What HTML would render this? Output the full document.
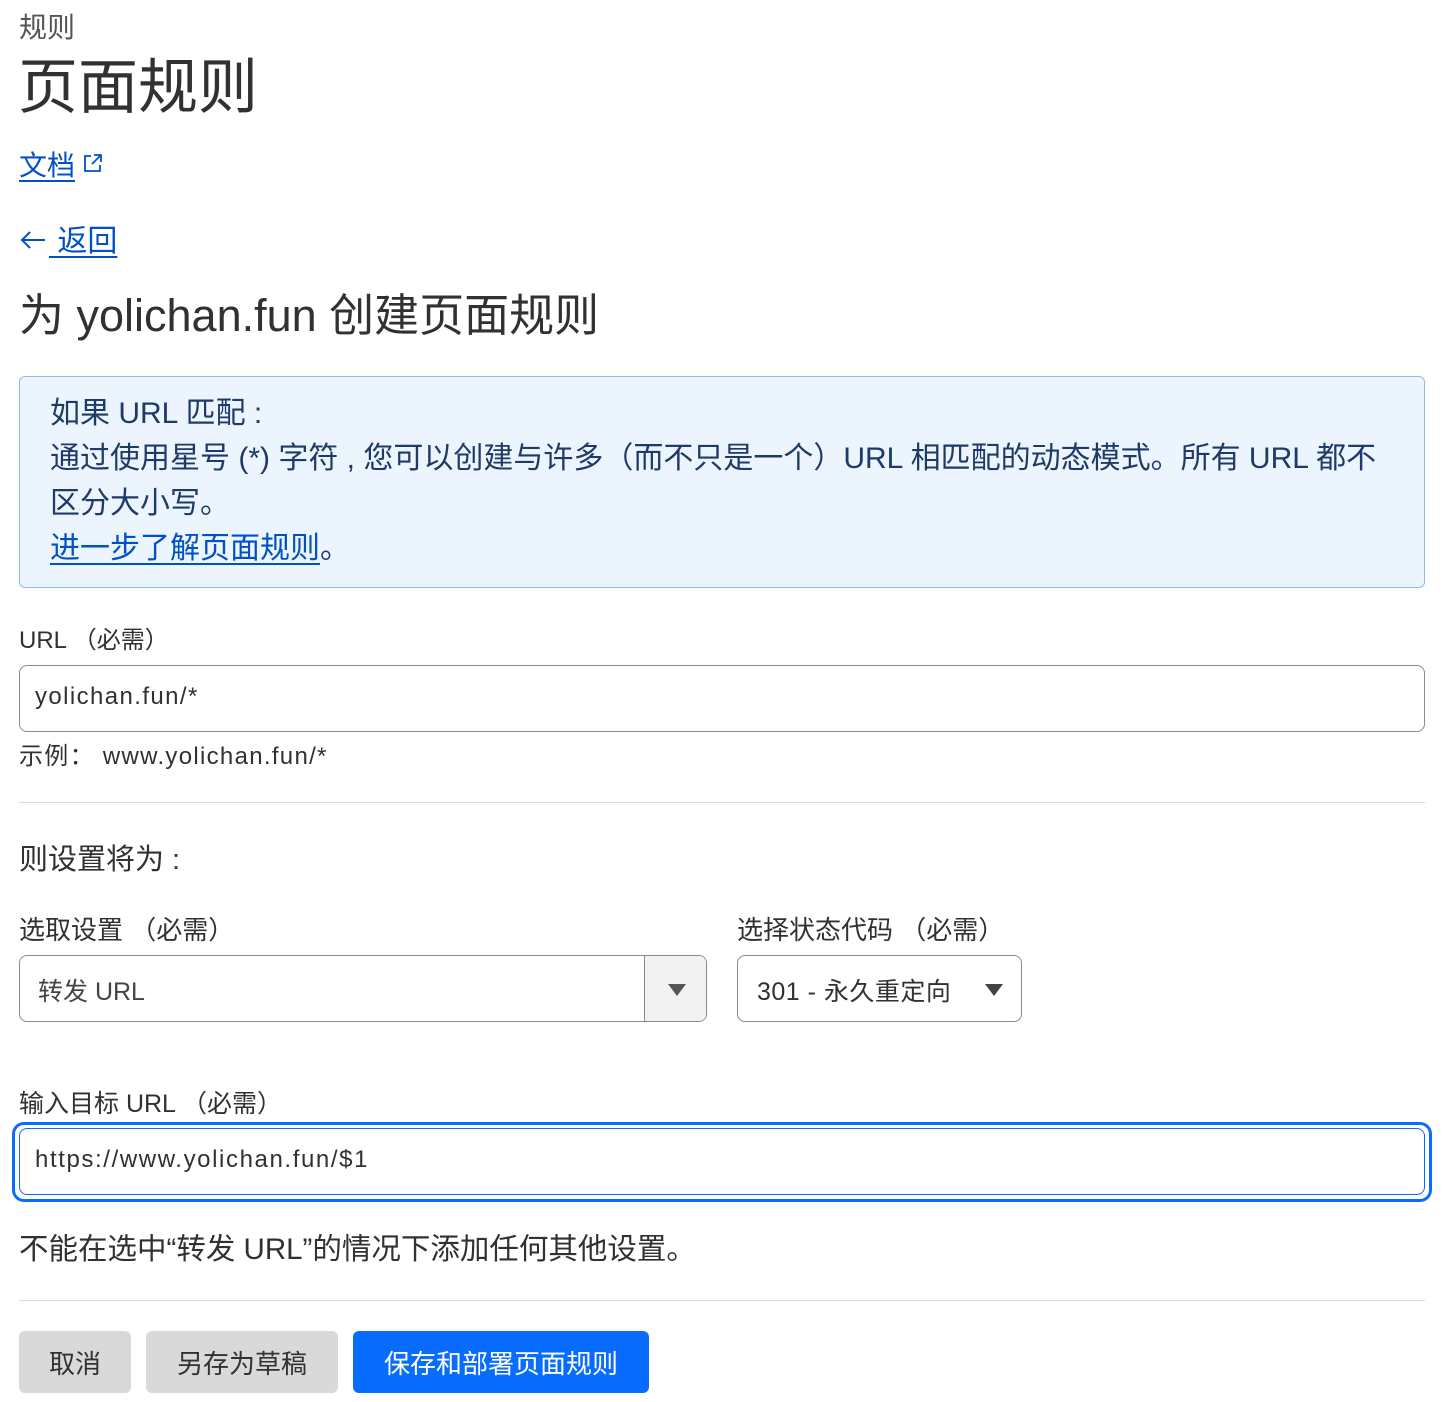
<!DOCTYPE html>
<html><head><meta charset="utf-8"><style>
*{margin:0;padding:0;box-sizing:border-box}
body{width:1456px;height:1402px;background:#fff;font-family:"Liberation Sans","Noto Sans CJK SC",sans-serif;color:#313131;position:relative;overflow:hidden}
.a{position:absolute;white-space:nowrap}
.lnk{color:#0051c3;text-decoration:underline;text-underline-offset:5px;text-decoration-thickness:2px}
.box{position:absolute;border:1px solid #8a8a8a;border-radius:8px;background:#fff}
.btn{position:absolute;top:1331px;height:62px;border-radius:6px;font-size:26px;display:flex;align-items:center;justify-content:center}
</style></head><body>
<div class="a" style="left:19px;top:6px;font-size:28px;color:#555">规则</div>
<div class="a" style="left:18px;top:48px;font-size:60px;line-height:80px">页面规则</div>
<div class="a lnk" style="left:19px;top:144px;font-size:28px">文档</div>
<svg class="a" style="left:83px;top:153px" width="20" height="20" viewBox="0 0 20 20" fill="none" stroke="#0051c3" stroke-width="1.8"><path d="M8 3H2v15h15v-6M11 2h7v7M18 2l-9 9"/></svg>
<svg class="a" style="left:19px;top:228px" width="28" height="24" viewBox="0 0 28 24" fill="none" stroke="#0051c3" stroke-width="2"><path d="M26 12H3M11 4l-8 8 8 8"/></svg>
<div class="a lnk" style="left:49px;top:216px;font-size:30px">&nbsp;返回</div>
<div class="a" style="left:19px;top:286px;font-size:45px;line-height:60px">为 yolichan.fun 创建页面规则</div>
<div class="a" style="left:19px;top:376px;width:1406px;height:212px;background:#ecf4fe;border:1px solid #8fbaf0;border-radius:6px"></div>
<div class="a" style="left:50px;top:391px;font-size:30px;line-height:45px;color:#1e3a66">如果 URL 匹配 :<br>通过使用星号 (*) 字符 , 您可以创建与许多（而不只是一个）URL 相匹配的动态模式。所有 URL 都不<br>区分大小写。<br><span class="lnk">进一步了解页面规则</span>。</div>
<div class="a" style="left:19px;top:620px;font-size:24px">URL （必需）</div>
<div class="box" style="left:19px;top:665px;width:1406px;height:67px"></div>
<div class="a" style="left:35px;top:683px;font-size:24px;letter-spacing:1.4px">yolichan.fun/*</div>
<div class="a" style="left:19px;top:736px;font-size:24px;letter-spacing:1.3px">示例： www.yolichan.fun/*</div>
<div class="a" style="left:19px;top:802px;width:1406px;height:1px;background:#d9d9d9"></div>
<div class="a" style="left:19px;top:836px;font-size:29px">则设置将为 :</div>
<div class="a" style="left:19px;top:910px;font-size:26px">选取设置 （必需）</div>
<div class="a" style="left:737px;top:910px;font-size:26px">选择状态代码 （必需）</div>
<div class="box" style="left:19px;top:955px;width:688px;height:67px;overflow:hidden"><div style="position:absolute;right:0;top:0;width:62px;height:100%;background:#f2f2f2;border-left:1px solid #8a8a8a"></div></div>
<div class="a" style="left:38px;top:972px;font-size:25px;color:#444">转发 URL</div>
<svg class="a" style="left:668px;top:984px" width="18" height="12"><path d="M0 0h18L9 12z" fill="#555"/></svg>
<div class="box" style="left:737px;top:955px;width:285px;height:67px"></div>
<div class="a" style="left:757px;top:972px;font-size:25px;letter-spacing:0.5px">301 - 永久重定向</div>
<svg class="a" style="left:985px;top:984px" width="18" height="12"><path d="M0 0h18L9 12z" fill="#444"/></svg>
<div class="a" style="left:19px;top:1084px;font-size:25px">输入目标 URL （必需）</div>
<div class="a" style="left:12px;top:1122px;width:1420px;height:80px;border:3px solid #0a6cff;border-radius:12px"></div>
<div class="a" style="left:19px;top:1128px;width:1406px;height:67px;border:1px solid #0a6cff;border-radius:8px"></div>
<div class="a" style="left:35px;top:1146px;font-size:24px;letter-spacing:1.6px">https://www.yolichan.fun/$1</div>
<div class="a" style="left:19px;top:1226px;font-size:29.5px">不能在选中“转发 URL”的情况下添加任何其他设置。</div>
<div class="a" style="left:19px;top:1300px;width:1406px;height:1px;background:#d9d9d9"></div>
<div class="btn" style="left:19px;width:112px;background:#d9d9d9">取消</div>
<div class="btn" style="left:146px;width:192px;background:#d9d9d9">另存为草稿</div>
<div class="btn" style="left:353px;width:296px;background:#086dff;color:#fff">保存和部署页面规则</div>
</body></html>
